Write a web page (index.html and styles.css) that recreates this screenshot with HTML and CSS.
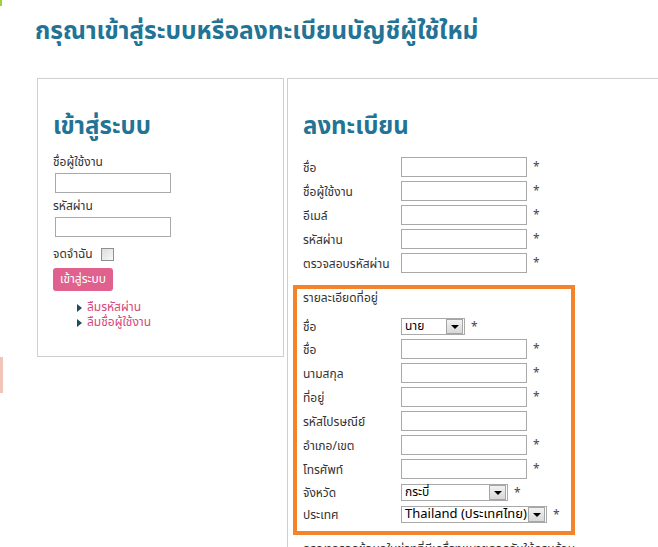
FILE: index.html
```html
<!DOCTYPE html>
<html lang="th">
<head>
<meta charset="utf-8">
<title>เข้าสู่ระบบ</title>
<link rel="stylesheet" href="styles.css">
</head>
<body>
<div class="page">
  <div class="mark"></div>
  <h1 class="title">กรุณาเข้าสู่ระบบหรือลงทะเบียนบัญชีผู้ใช้ใหม่</h1>
  <div class="main">
    <div class="strip"><div class="strip-bar"></div></div>
    <div class="login">
      <h2 class="heading">เข้าสู่ระบบ</h2>
      <div class="label first">ชื่อผู้ใช้งาน</div>
      <div class="input login-input"></div>
      <div class="label">รหัสผ่าน</div>
      <div class="input login-input"></div>
      <div class="remember"><span>จดจำฉัน</span><span class="checkbox"></span></div>
      <div class="btn">เข้าสู่ระบบ</div>
      <ul class="links">
        <li><span class="tri"></span>ลืมรหัสผ่าน</li>
        <li><span class="tri"></span>ลืมชื่อผู้ใช้งาน</li>
      </ul>
    </div>
    <div class="register">
      <h2 class="heading">ลงทะเบียน</h2>
      <div class="rows">
        <div class="row"><span class="lbl">ชื่อ</span><span class="input"></span><span class="req">*</span></div>
        <div class="row"><span class="lbl">ชื่อผู้ใช้งาน</span><span class="input"></span><span class="req">*</span></div>
        <div class="row"><span class="lbl">อีเมล์</span><span class="input"></span><span class="req">*</span></div>
        <div class="row"><span class="lbl">รหัสผ่าน</span><span class="input"></span><span class="req">*</span></div>
        <div class="row"><span class="lbl">ตรวจสอบรหัสผ่าน</span><span class="input"></span><span class="req">*</span></div>
      </div>
      <div class="address">
        <div class="addr-title">รายละเอียดที่อยู่</div>
        <div class="row sel-row"><span class="lbl">ชื่อ</span><span class="select sel-title"><span class="sel-text">นาย</span><span class="sel-btn"></span></span><span class="req">*</span></div>
        <div class="row"><span class="lbl">ชื่อ</span><span class="input"></span><span class="req">*</span></div>
        <div class="row"><span class="lbl">นามสกุล</span><span class="input"></span><span class="req">*</span></div>
        <div class="row"><span class="lbl">ที่อยู่</span><span class="input"></span><span class="req">*</span></div>
        <div class="row"><span class="lbl">รหัสไปรษณีย์</span><span class="input"></span></div>
        <div class="row"><span class="lbl">อำเภอ/เขต</span><span class="input"></span><span class="req">*</span></div>
        <div class="row"><span class="lbl">โทรศัพท์</span><span class="input"></span><span class="req">*</span></div>
        <div class="row sel-row"><span class="lbl">จังหวัด</span><span class="select sel-prov"><span class="sel-text">กระบี่</span><span class="sel-btn"></span></span><span class="req">*</span></div>
        <div class="row sel-row"><span class="lbl">ประเทศ</span><span class="select sel-country"><span class="sel-text country">Thailand (ประเทศไทย)</span><span class="sel-btn"></span></span><span class="req">*</span></div>
      </div>
      <p class="note">กรุณากรอกข้อมูลในช่องที่มีเครื่องหมายดอกจันให้ครบถ้วน</p>
    </div>
  </div>
</div>
</body>
</html>
```

FILE: styles.css
```css
html, body {
  margin: 0;
  padding: 0;
  background: #fff;
  overflow: hidden;
}
body {
  font-family: Tahoma, "Noto Sans Thai", "DejaVu Sans", sans-serif;
  font-size: 12px;
  color: #333;
  width: 658px;
  height: 547px;
}
.mark {
  width: 2px;
  height: 6px;
  background: #9bd33a;
}
.title {
  margin: 6px 0 0 35px;
  font-size: 24.5px;
  line-height: 40px;
  font-weight: bold;
  color: #237494;
  height: 60px;
}
.main {
  display: flex;
  align-items: flex-start;
  margin-top: 6px;
}
.strip {
  width: 3px;
  padding-top: 279px;
}
.strip-bar {
  height: 36px;
  background: #f2c3b9;
}
.login {
  margin-left: 34px;
  width: 230px;
  height: 277px;
  border: 1px solid #cfcfcf;
  padding: 0 0 0 15px;
}
.heading {
  margin: 33px 0 0 0;
  font-size: 24px;
  line-height: 30px;
  font-weight: bold;
  color: #237494;
}
.label {
  margin-top: 5px;
  line-height: 16px;
}
.label.first {
  margin-top: 12px;
}
.input {
  display: inline-block;
  width: 114px;
  height: 18px;
  border: 1px solid #a9a9a9;
  background: #fff;
}
.register .input {
  width: 124px;
}
.login-input {
  display: block;
  margin: 3px 0 0 2px;
}
.remember {
  display: flex;
  align-items: center;
  margin-top: 9px;
  height: 16px;
}
.checkbox {
  width: 11px;
  height: 11px;
  border: 1px solid #8f8f8f;
  background: linear-gradient(135deg, #dcdcdc, #f8f8f8);
  margin-left: 8px;
}
.btn {
  display: inline-block;
  margin-top: 6px;
  background: #e0608e;
  color: #fff;
  border-radius: 3px;
  padding: 0 7px;
  line-height: 23px;
  height: 23px;
}
.links {
  list-style: none;
  margin: 9px 0 0 24px;
  padding: 0;
  color: #d6477c;
  line-height: 15px;
}
.links li {
  display: flex;
  align-items: center;
}
.tri {
  width: 0;
  height: 0;
  border-left: 5px solid #1b4e5e;
  border-top: 4px solid transparent;
  border-bottom: 4px solid transparent;
  margin-right: 5px;
}
.register {
  margin-left: 3px;
  flex: 1;
  height: 480px;
  border-top: 1px solid #cfcfcf;
  border-left: 1px solid #cfcfcf;
  padding-left: 15px;
}
.rows {
  margin-top: 13px;
}
.row {
  display: flex;
  align-items: center;
  height: 24px;
}
.lbl {
  width: 98px;
  padding-top: 2px;
}
.req {
  align-self: flex-start;
  margin: 3px 0 0 6px;
  color: #444;
}
.address {
  margin: 10px 0 0 -10px;
  width: 268px;
  border: 4px solid #f5832a;
  padding: 2px 0 6px 6px;
}
.addr-title {
  line-height: 14px;
  margin-bottom: 10px;
}
.sel-row {
  height: 22px;
}
.select {
  display: flex;
  align-items: center;
  height: 17px;
  border: 1px solid #a9a9a9;
  box-sizing: border-box;
  background: #fff;
  color: #000;
}
.sel-text {
  flex: 1;
  padding-left: 3px;
  font-size: 12px;
  line-height: 15px;
}
.country {
  font-size: 13px;
}
.sel-btn {
  width: 15px;
  height: 13px;
  margin-right: 1px;
  border: 1px solid #a6a6a6;
  background: linear-gradient(#f2f2f2, #d8d8d8);
  position: relative;
}
.sel-btn::after {
  content: "";
  position: absolute;
  left: 4px;
  top: 5px;
  border-top: 4px solid #000;
  border-left: 4px solid transparent;
  border-right: 4px solid transparent;
}
.sel-title { width: 64px; }
.sel-prov { width: 107px; }
.sel-country { width: 146px; }
.note {
  margin: 5px 0 0 0;
}
```
